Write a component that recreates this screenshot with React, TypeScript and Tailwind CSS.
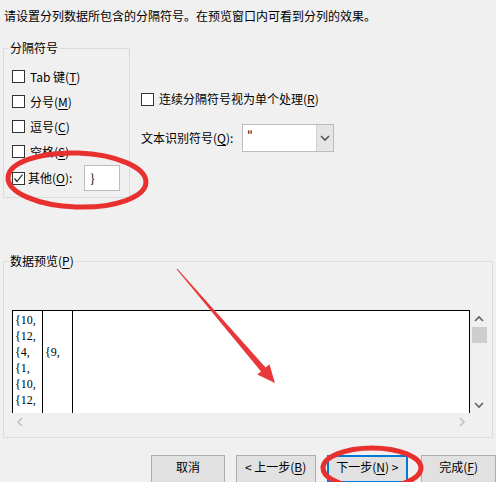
import React from "react";

const cjk = "font-['Noto_Sans_CJK_SC','Noto_Sans',sans-serif]";

function Box({ checked = false }: { checked?: boolean }) {
  return (
    <span className="relative w-[13px] h-[13px] border border-[#333] bg-white shrink-0">
      {checked && (
        <svg viewBox="0 0 13 13" className="absolute -left-px -top-px w-[13px] h-[13px]">
          <path d="M2.5 6.5 L5 9.5 L10.5 2.5" fill="none" stroke="#222" strokeWidth="1.2" />
        </svg>
      )}
    </span>
  );
}

function Key({ k }: { k: string }) {
  return (
    <>
      (<span className="underline underline-offset-2">{k}</span>)
    </>
  );
}

function Chevron({ dir, color = "#606060" }: { dir: "up" | "down" | "left" | "right"; color?: string }) {
  const d = {
    up: "M1 6 L5 2 L9 6",
    down: "M1 2 L5 6 L9 2",
    left: "M6 1 L2 5 L6 9",
    right: "M2 1 L6 5 L2 9",
  }[dir];
  const box = dir === "up" || dir === "down" ? "0 0 10 8" : "0 0 8 10";
  const cls = dir === "up" || dir === "down" ? "w-[10px] h-[8px]" : "w-[8px] h-[10px]";
  return (
    <svg viewBox={box} className={cls}>
      <path d={d} fill="none" stroke={color} strokeWidth="1.6" />
    </svg>
  );
}

const options = [
  { label: "Tab 键", k: "T" },
  { label: "分号", k: "M" },
  { label: "逗号", k: "C" },
  { label: "空格", k: "S" },
];

const col1 = ["{10,", "{12,", "{4,", "{1,", "{10,", "{12,"];
const col2 = ["", "", "{9,", "", "", ""];

export default function App() {
  return (
    <div className={`relative w-[496px] h-[482px] overflow-hidden bg-[#f0f0f0] text-[12px] leading-[16px] text-black ${cjk}`}>
      <p className="pt-[8px] pl-[4px]">请设置分列数据所包含的分隔符号。在预览窗口内可看到分列的效果。</p>

      <div className="flex mt-[16px]">
        <fieldset className="ml-[3px] w-[127px] border border-[#dcdcdc]">
          <legend className="ml-[5px] px-px">分隔符号</legend>
          <div className="pt-[8px] pb-[5px] pl-[8px]">
            {options.map((o) => (
              <div key={o.k} className="flex items-center h-[25px] gap-[5px]">
                <Box />
                <span>
                  {o.label}
                  <Key k={o.k} />
                </span>
              </div>
            ))}
            <div className="flex items-center h-[28px] gap-[3px]">
              <Box checked />
              <span>
                其他<Key k="O" />:
              </span>
              <div className="ml-[9px] w-[36px] h-[26px] bg-white border border-[#bcbcbc] pl-[5px] flex items-center">
                {"}"}
              </div>
            </div>
          </div>
        </fieldset>

        <div className="ml-[11px] pt-[51px]">
          <div className="flex items-center h-[16px] gap-[5px]">
            <Box />
            <span>
              连续分隔符号视为单个处理<Key k="R" />
            </span>
          </div>
          <div className="flex items-center mt-[17px] h-[28px]">
            <span className="w-[101px]">
              文本识别符号<Key k="Q" />:
            </span>
            <div className="flex w-[92px] h-[28px] bg-white border border-[#bcbcbc]">
              <span className="flex-1 pl-[4px] pt-[2px]">"</span>
              <span className="w-[17px] bg-[#e5e5e5] border-l border-[#d0d0d0] flex items-center justify-center">
                <Chevron dir="down" color="#555" />
              </span>
            </div>
          </div>
        </div>
      </div>

      <fieldset className="mt-[55px] ml-[3px] w-[490px] border border-[#dcdcdc]">
        <legend className="ml-[5px] px-px">
          数据预览<Key k="P" />
        </legend>
        <div className="pt-[41px] pb-[7px] pl-[8px]">
          <div className="grid grid-cols-[458px_18px] grid-rows-[103px_17px] w-[476px]">
            <div className="flex bg-white border-l border-t border-r border-black font-['Liberation_Serif',serif] text-[12px]">
              <div className="w-[30px] border-r border-black pl-[2px] pt-[1px]">
                {col1.map((t, i) => (
                  <div key={i} className="h-[16px]">{t}</div>
                ))}
              </div>
              <div className="w-[30px] border-r border-black pl-[2px] pt-[1px]">
                {col2.map((t, i) => (
                  <div key={i} className="h-[16px]">{t}</div>
                ))}
              </div>
              <div className="flex-1" />
            </div>
            <div className="flex flex-col items-center">
              <div className="h-[17px] flex items-center justify-center">
                <Chevron dir="up" />
              </div>
              <div className="w-[15px] h-[16px] bg-[#cdcdcd]" />
              <div className="flex-1" />
              <div className="h-[17px] flex items-center justify-center">
                <Chevron dir="down" />
              </div>
            </div>
            <div className="flex items-center justify-between px-[4px]">
              <Chevron dir="left" color="#c2c2c2" />
              <Chevron dir="right" color="#c2c2c2" />
            </div>
            <div />
          </div>
        </div>
      </fieldset>

      <div className="flex mt-[17px]">
        <button className="ml-[151px] w-[74px] h-[28px] bg-[#e1e1e1] border border-[#adadad] pb-[4px]">取消</button>
        <button className="ml-[11px] w-[80px] h-[28px] bg-[#e1e1e1] border border-[#adadad] pb-[4px]">
          &lt; 上一步<Key k="B" />
        </button>
        <button className="ml-[11px] w-[82px] h-[28px] bg-[#e1e1e1] border-2 border-[#0078d7] pb-[4px]">
          下一步<Key k="N" /> &gt;
        </button>
        <button className="ml-[13px] w-[75px] h-[28px] bg-[#e1e1e1] border border-[#adadad] pb-[4px]">
          完成<Key k="F" />
        </button>
      </div>

      <svg className="absolute inset-0 pointer-events-none" width="496" height="482" viewBox="0 0 496 482">
        <ellipse cx="77" cy="180" rx="69" ry="27" fill="none" stroke="#e8302f" strokeWidth="5" transform="rotate(2 77 180)" />
        <ellipse cx="372" cy="468" rx="49" ry="20" fill="none" stroke="#e8302f" strokeWidth="5" />
        <polygon
          points="176.6,269.3 261,371.4 257.2,374.6 275,383 269.4,364.2 265.6,367.4 177.4,268.7"
          fill="#e8383a"
        />
      </svg>
    </div>
  );
}
